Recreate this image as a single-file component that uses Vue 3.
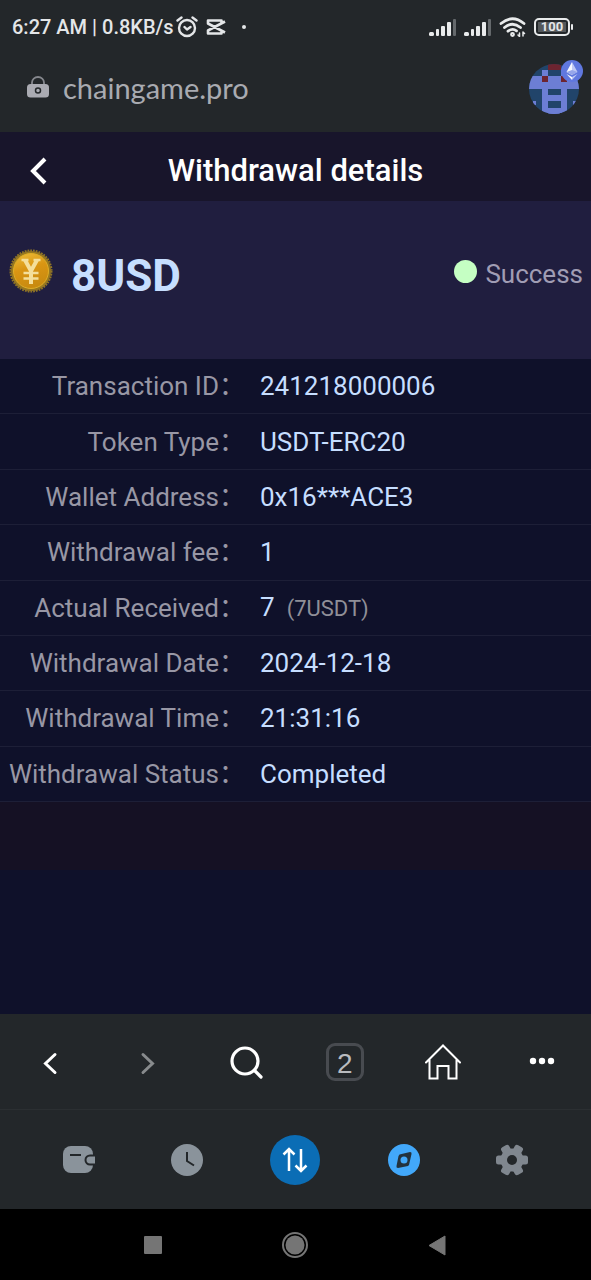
<script setup>
const details = [
  { label: 'Transaction ID', value: '241218000006' },
  { label: 'Token Type', value: 'USDT-ERC20' },
  { label: 'Wallet Address', value: '0x16***ACE3' },
  { label: 'Withdrawal fee', value: '1' },
  { label: 'Actual Received', value: '7', note: '(7USDT)' },
  { label: 'Withdrawal Date', value: '2024-12-18' },
  { label: 'Withdrawal Time', value: '21:31:16' },
  { label: 'Withdrawal Status', value: 'Completed' },
]
const teeth = [0, 60, 120, 180, 240, 300]
</script>

<template>
  <div class="screen">
    <div class="status-bar">
      <span class="clock">6:27 AM | 0.8KB/s</span>
      <svg class="alarm" width="22" height="22" viewBox="0 0 22 22" fill="none" stroke="#e4e6e8" stroke-width="2.400" stroke-linecap="round" stroke-linejoin="round">
        <circle cx="11" cy="12" r="8" />
        <path d="M1.5 4.500 5.500 1.500M20.500 4.500 16.500 1.500M8.500 11l2.500 2.500 3.500-2.500" />
      </svg>
      <svg class="cut" width="20" height="18" viewBox="0 0 20 18" fill="none" stroke="#e4e6e8" stroke-width="2.600" stroke-linejoin="round">
        <path d="M19 3.500 2 12.500V15.500h13.500V13.500M19 14.500 2 5.500V2.500h13.500V4.500" />
      </svg>
      <span class="notice-dot"></span>
      <span class="spacer"></span>
      <svg v-for="n in 2" :key="n" class="signal" width="28" height="18" viewBox="0 0 28 18" fill="#e9ebec">
        <rect x="0" y="14" width="5" height="4" rx="1.500" />
        <rect x="7" y="11" width="3" height="7" rx="1" />
        <rect x="12" y="8" width="4" height="10" rx="1" />
        <rect x="18" y="4" width="4" height="14" rx="1" />
        <rect x="24" y="1" width="3" height="17" rx="1" fill="#65696c" />
      </svg>
      <svg class="wifi" width="28" height="20" viewBox="0 0 28 20" fill="none" stroke="#e9ebec" stroke-width="2.800" stroke-linecap="round">
        <path d="M2 6.500Q13.500-3 25 6.500M5.500 10.500Q13.500 4 21.500 10.500M9 14.200Q13.500 10.800 17.500 13.800" />
        <circle cx="13.500" cy="17.500" r="1" />
        <path d="M20.500 16v3M24 15v4M19 18l1.500 1.500M25.500 16.500 24 15" stroke-width="1.500" />
      </svg>
      <span class="battery"><span class="battery-level">100</span></span>
    </div>

    <header class="address-bar">
      <svg width="22" height="22" viewBox="0 0 22 22">
        <path d="M5 9V6.500a6 5.500 0 0 1 12 0V9" fill="none" stroke="#85878d" stroke-width="1.800" />
        <rect y="8" width="22" height="13.500" rx="3.500" fill="#aaabb2" />
        <circle cx="11" cy="14.500" r="2.500" fill="none" stroke="#23272a" stroke-width="1.500" />
      </svg>
      <span class="host">chaingame.pro</span>
      <button class="avatar" aria-label="Account">
        <svg width="58" height="58" viewBox="0 0 58 58">
          <clipPath id="face"><circle cx="27" cy="31" r="25" /></clipPath>
          <g clip-path="url(#face)">
            <rect width="58" height="58" fill="#21446a" />
            <path d="M15 12h6v6h13v-6h6v6h14v13H40v26H15V31H2V18h13z" fill="#6c7ed4" />
            <path d="M21 31h13v12H21zM21 37M21 50h13v-6H21z" fill="#21446a" />
            <path d="M20 43h15v-6H20zM20 50h15v8H20z" fill="#6c7ed4" />
            <path d="M21 43h13v7H21z" fill="#21446a" />
            <path d="M6 43h3v4H6zM46 43h3v4h-3z" fill="#6c7ed4" />
            <path d="M21 4h13v8H21zM15 18h6v6h-6zM34 18h6v6h-6z" fill="#6d2430" />
          </g>
          <circle cx="45" cy="13" r="11" fill="#6078df" />
          <path d="m45 4-5.500 10 5.500 3zM45 22l-5.500-6 5.500 3z" fill="#f6f8ff" />
          <path d="m45 4 5.500 10-5.500 3zM45 22l5.500-6-5.500 3z" fill="#c0c9f5" />
          <path d="m39.500 14 5.500-2 5.500 2-5.500 3z" fill="#96a6ea" />
        </svg>
      </button>
    </header>

    <main class="content">
      <div class="title-bar">
        <button class="back" aria-label="Back">
          <svg width="20" height="28" viewBox="0 0 20 28" fill="none" stroke="#fff" stroke-width="4"><path d="M17 2 5 14l12 12" /></svg>
        </button>
        <h1>Withdrawal details</h1>
      </div>

      <section class="summary">
        <svg width="44" height="44" viewBox="0 0 44 44">
          <defs>
            <linearGradient id="gold" x1="0" y1="0" x2="0.300" y2="1">
              <stop offset="0" stop-color="#eebd38" /><stop offset="0.500" stop-color="#d99513" /><stop offset="1" stop-color="#c98b10" />
            </linearGradient>
          </defs>
          <circle cx="22" cy="22" r="20" fill="#98781f" />
          <circle cx="22" cy="22" r="20.500" fill="none" stroke="#8f7426" stroke-width="2" stroke-dasharray="1.800 1" />
          <circle cx="22" cy="22" r="17.500" fill="url(#gold)" stroke="#dfae27" />
          <path d="m16 11 6 11 6-11M22 21v14" fill="none" stroke="#f4df9b" stroke-width="4" />
          <path d="M12.500 11h7M24.500 11h7M14.500 24h15M14.500 29.500h15" fill="none" stroke="#f4df9b" stroke-width="2.500" />
        </svg>
        <strong class="amount">8USD</strong>
        <span class="state"><i class="state-dot"></i><span class="state-text">Success</span></span>
      </section>

      <dl class="details">
        <div v-for="row in details" :key="row.label" class="row">
          <dt>{{ row.label }}：</dt>
          <dd>{{ row.value }}<small v-if="row.note">{{ row.note }}</small></dd>
        </div>
      </dl>
      <div class="band"></div>
    </main>

    <nav class="browser-nav" aria-label="Browser">
      <button aria-label="Previous page">
        <svg width="36" height="36" viewBox="0 0 36 36" fill="none" stroke="#fff" stroke-width="3" stroke-linecap="round"><path d="m24 10.500-9.500 9L24 28.500" /></svg>
      </button>
      <button aria-label="Next page">
        <svg width="36" height="36" viewBox="0 0 36 36" fill="none" stroke="#888b8d" stroke-width="3" stroke-linecap="round"><path d="m13 10.500 9.500 9-9.500 9" /></svg>
      </button>
      <button aria-label="Search">
        <svg width="36" height="36" viewBox="0 0 36 36" fill="none" stroke="#fff" stroke-width="3.200" stroke-linecap="round"><circle cx="17" cy="17" r="13" /><path d="m27 27 6 6" /></svg>
      </button>
      <button aria-label="Tabs"><span class="tabs">2</span></button>
      <button aria-label="Home">
        <svg width="36" height="36" viewBox="0 0 36 36" fill="none" stroke="#fff" stroke-width="2" stroke-linecap="round"><path d="M1 18.500 18 1.500l17 17M4.500 16v18.500h8V22h11v12.500h8V16" /></svg>
      </button>
      <button aria-label="More">
        <svg width="36" height="36" viewBox="0 0 36 36" fill="#fff"><circle cx="9" cy="17" r="3.200" /><circle cx="18" cy="17" r="3.200" /><circle cx="27" cy="17" r="3.200" /></svg>
      </button>
    </nav>

    <nav class="wallet-nav" aria-label="Wallet">
      <button aria-label="Wallet">
        <svg width="34" height="34" viewBox="0 0 34 34">
          <rect x="1" y="3" width="30" height="27" rx="8" fill="#8a939b" />
          <path d="M33 12.500h-5a4.500 4.500 0 0 0 0 9h5" fill="#8a939b" stroke="#23272a" stroke-width="2" />
          <path d="M8 12h11" stroke="#23272a" stroke-width="2" />
        </svg>
      </button>
      <button aria-label="History">
        <svg width="34" height="34" viewBox="0 0 34 34"><circle cx="17" cy="17" r="16" fill="#8a939b" /><path d="M17 9v9l7 4.500" fill="none" stroke="#23272a" stroke-width="2" /></svg>
      </button>
      <button aria-label="Swap">
        <svg width="52" height="52" viewBox="0 0 52 52"><circle cx="26" cy="26" r="25" fill="#0b6db5" /><path d="M20 37V15m-5.500 5.500L20 15l5.500 5.500M32 15v22m-5.500-5.500L32 37l5.500-5.500" fill="none" stroke="#fff" stroke-width="2.500" /></svg>
      </button>
      <button aria-label="Discover">
        <svg width="34" height="34" viewBox="0 0 34 34"><circle cx="17" cy="17" r="16" fill="#42a8fa" /><path d="M12.500 11.500 23 9q2 0 1.500 2L22 22l-1 1-10 2q-2 0-1.500-2L11.500 13z" fill="#23323e" /><circle cx="17" cy="17" r="3.500" fill="#42a8fa" /></svg>
      </button>
      <button aria-label="Settings">
        <svg width="34" height="34" viewBox="0 0 34 34" fill="#80878f">
          <circle cx="17" cy="17" r="11.500" />
          <rect v-for="angle in teeth" :key="angle" x="12.500" y="1" width="9" height="10" rx="2.500" :transform="`rotate(${angle + 30} 17 17)`" />
          <circle cx="17" cy="17" r="5" fill="#23272a" />
        </svg>
      </button>
    </nav>

    <nav class="system-nav" aria-label="System">
      <button aria-label="Recent apps"><svg width="28" height="28" viewBox="0 0 28 28"><rect x="5" y="5" width="18" height="18" rx="1" fill="#757575" /></svg></button>
      <button aria-label="Home screen"><svg width="28" height="28" viewBox="0 0 28 28"><circle cx="14" cy="14" r="12" fill="none" stroke="#757575" stroke-width="2" /><circle cx="14" cy="14" r="9.500" fill="#757575" /></svg></button>
      <button aria-label="System back"><svg width="28" height="28" viewBox="0 0 28 28"><path d="M21 5v19L5 14.500z" fill="#757575" stroke="#757575" stroke-linejoin="round" /></svg></button>
    </nav>
  </div>
</template>

<style>
body {
  margin: 0;
  background: #0f112a;
}
</style>

<style scoped>
* {
  box-sizing: border-box;
}
.screen {
  display: flex;
  flex-direction: column;
  min-height: 100vh;
  background: #23272a;
  font-family: Roboto, "Noto Sans CJK SC", sans-serif;
}
button {
  display: flex;
  align-items: center;
  justify-content: center;
  padding: 0;
  border: 0;
  background: none;
  color: inherit;
  font: inherit;
}
svg {
  display: block;
  flex: none;
}
.status-bar {
  display: flex;
  align-items: center;
  height: 54px;
  padding: 0 21px 0 12px;
  color: #e4e6e8;
}
.clock {
  font-size: 20px;
  font-weight: 500;
  white-space: nowrap;
}
.alarm {
  margin-left: 2px;
}
.cut {
  margin-left: 8px;
}
.notice-dot {
  width: 4px;
  height: 4px;
  margin-left: 16px;
  border-radius: 50%;
  background: #e4e6e8;
}
.spacer {
  flex: 1;
}
.signal {
  margin-right: 7px;
}
.wifi {
  margin-right: 7px;
}
.battery {
  position: relative;
  width: 36px;
  height: 18px;
  padding: 2px;
  border: 2px solid #e9ebec;
  border-radius: 5px;
}
.battery::after {
  position: absolute;
  top: 4px;
  right: -5px;
  width: 2px;
  height: 6px;
  border-radius: 1px;
  background: #e9ebec;
  content: "";
}
.battery-level {
  display: block;
  background: #54585b;
  font-size: 13px;
  font-weight: 700;
  line-height: 10px;
  text-align: center;
}
.address-bar {
  display: flex;
  align-items: center;
  gap: 14px;
  height: 78px;
  padding: 0 6px 12px 27px;
}
.host {
  flex: 1;
  color: #a9abb1;
  font-family: Lato, sans-serif;
  font-size: 29px;
}
.content {
  flex: 1;
  background: #0f112a;
}
.title-bar {
  display: grid;
  grid-template-columns: 76px 1fr 76px;
  align-items: center;
  height: 69px;
  padding-top: 8px;
  background: #18152b;
}
h1 {
  margin: 0;
  color: #fff;
  font-size: 31px;
  font-weight: 500;
  line-height: 40px;
  text-align: center;
}
.summary {
  display: flex;
  align-items: center;
  height: 158px;
  padding: 0 8px 18px 9px;
  background: #201e3f;
}
.amount {
  margin-left: 18px;
  padding-top: 10px;
  color: #c6deff;
  font-size: 44px;
  font-weight: 700;
}
.state {
  display: flex;
  align-items: center;
  gap: 8px;
  margin-left: auto;
  color: #a09db4;
  font-size: 26px;
}
.state-text {
  padding-top: 6px;
}
.state-dot {
  width: 23px;
  height: 23px;
  border-radius: 50%;
  background: #c5ffc3;
}
.details {
  display: grid;
  grid-auto-rows: 1fr;
  min-height: 443px;
  margin: 0;
}
.row {
  display: grid;
  grid-template-columns: 245px 1fr;
  align-items: center;
  column-gap: 15px;
  border-bottom: 1px solid #1d1f37;
  font-size: 26px;
  line-height: 36px;
}
dt {
  color: #9897a5;
  text-align: right;
  white-space: nowrap;
}
dd {
  margin: 0;
  color: #c6deff;
}
small {
  margin-left: 12px;
  color: #8f8f98;
  font-size: 22px;
}
.band {
  height: 68px;
  background: #151124;
}
.browser-nav {
  display: grid;
  grid-template-columns: repeat(6, 1fr);
  height: 96px;
  border-bottom: 1px solid #2b2f32;
}
.tabs {
  width: 38px;
  height: 38px;
  border: 3px solid #484b50;
  border-radius: 9px;
  color: #b9bbbf;
  font-family: "Liberation Sans", sans-serif;
  font-size: 28px;
  line-height: 36px;
}
.wallet-nav {
  display: grid;
  grid-template-columns: repeat(5, 1fr);
  height: 99px;
  padding: 0 25px;
}
.system-nav {
  display: grid;
  grid-template-columns: repeat(3, 1fr);
  height: 71px;
  padding: 0 82px;
  background: #000;
}
</style>
